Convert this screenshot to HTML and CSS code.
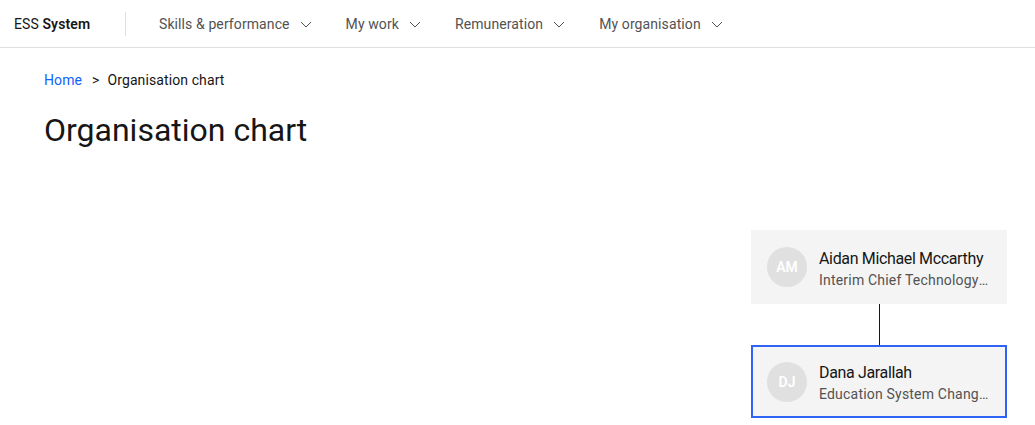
FILE: index.html
```html
<!DOCTYPE html>
<html lang="en">
<head>
<meta charset="utf-8">
<title>Organisation chart</title>
<link rel="stylesheet" href="styles.css">
</head>
<body>
<header class="header">
  <a class="brand" href="#">ESS <strong>System</strong></a>
  <nav class="nav">
    <a class="nav-item" href="#">Skills &amp; performance<svg class="chev" viewBox="0 0 16 16"><path d="M3 6l5 5 5-5"/></svg></a>
    <a class="nav-item" href="#">My work<svg class="chev" viewBox="0 0 16 16"><path d="M3 6l5 5 5-5"/></svg></a>
    <a class="nav-item" href="#">Remuneration<svg class="chev" viewBox="0 0 16 16"><path d="M3 6l5 5 5-5"/></svg></a>
    <a class="nav-item" href="#">My organisation<svg class="chev" viewBox="0 0 16 16"><path d="M3 6l5 5 5-5"/></svg></a>
  </nav>
</header>
<main class="main">
  <ol class="breadcrumb">
    <li><a href="#">Home</a></li>
    <li class="sep">&gt;</li>
    <li>Organisation chart</li>
  </ol>
  <h1 class="title">Organisation chart</h1>
  <section class="org">
    <div class="card">
      <div class="avatar">AM</div>
      <div class="info">
        <div class="name">Aidan Michael Mccarthy</div>
        <div class="role">Interim Chief Technology Officer</div>
      </div>
    </div>
    <div class="link"></div>
    <div class="card selected">
      <div class="avatar">DJ</div>
      <div class="info">
        <div class="name">Dana Jarallah</div>
        <div class="role">Education System Change Lead</div>
      </div>
    </div>
  </section>
</main>
</body>
</html>
```
FILE: styles.css
```css
* { box-sizing: border-box; }

html, body {
  margin: 0;
  padding: 0;
  background: #ffffff;
  color: #161616;
  font-family: Roboto, "Noto Sans", sans-serif;
}

a { text-decoration: none; color: inherit; }

/* Top bar */
.header {
  height: 48px;
  display: flex;
  align-items: center;
  border-bottom: 1px solid #e0e0e0;
}

.brand {
  width: 125px;
  padding-left: 14px;
  font-size: 14px;
  color: #161616;
  letter-spacing: 0.1px;
}

.brand strong { font-weight: 600; }

.nav {
  display: flex;
  align-items: center;
  height: 100%;
  padding-left: 18px;
  position: relative;
}

.nav::before {
  content: "";
  position: absolute;
  left: 0;
  top: 12px;
  height: 24px;
  width: 1px;
  background: #e0e0e0;
}

.nav-item {
  display: flex;
  align-items: center;
  height: 100%;
  padding: 0 16px;
  font-size: 14px;
  color: #525252;
  letter-spacing: 0.1px;
}

.chev {
  width: 16px;
  height: 16px;
  margin-left: 8px;
  fill: none;
  stroke: #525252;
  stroke-width: 1;
}

/* Page body */
.main {
  padding: 0 28px 0 44px;
}

.breadcrumb {
  list-style: none;
  margin: 23px 0 0;
  padding: 0;
  display: flex;
  font-size: 14px;
  line-height: 18px;
  letter-spacing: 0.1px;
}

.breadcrumb a { color: #0f62fe; }

.breadcrumb .sep {
  margin: 0 8px 0 10px;
}

.title {
  margin: 21px 0 0;
  font-size: 32px;
  line-height: 40px;
  font-weight: 400;
}

/* Organisation tree */
.org {
  display: flex;
  flex-direction: column;
  align-items: center;
  width: 256px;
  margin: 80px 0 0 auto;
}

.card {
  width: 256px;
  height: 74px;
  background: #f4f4f4;
  display: flex;
  align-items: center;
  padding: 0 14px 0 16px;
  gap: 12px;
  border: 2px solid transparent;
}

.card.selected {
  border-color: #2f62f5;
  height: 73px;
}

.card .avatar { margin-left: -2px; }

.avatar {
  flex: none;
  width: 40px;
  height: 40px;
  border-radius: 50%;
  background: #e0e0e0;
  color: #ffffff;
  font-size: 14px;
  font-weight: 600;
  display: flex;
  align-items: center;
  justify-content: center;
}

.info {
  min-width: 0;
  flex: 1;
  padding-top: 3px;
}

.name {
  font-size: 16px;
  line-height: 22px;
  color: #161616;
  white-space: nowrap;
  overflow: hidden;
  text-overflow: ellipsis;
  letter-spacing: -0.35px;
}

.role {
  font-size: 14px;
  line-height: 20px;
  color: #525252;
  white-space: nowrap;
  overflow: hidden;
  text-overflow: ellipsis;
  letter-spacing: 0.2px;
}

.link {
  width: 1px;
  height: 41px;
  background: #161616;
}
```
